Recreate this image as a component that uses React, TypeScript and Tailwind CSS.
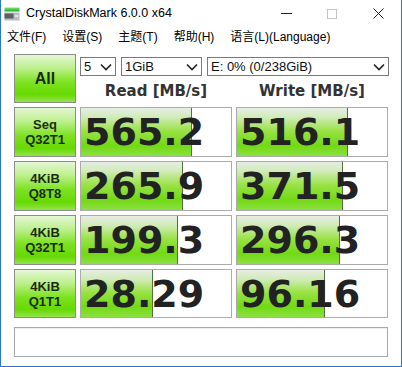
import React from 'react';

type Row = {
  top: string;
  bottom: string;
  read: string;
  write: string;
  readFill: number;
  writeFill: number;
};

const ROWS: Row[] = [
  { top: 'Seq', bottom: 'Q32T1', read: '565.2', write: '516.1', readFill: 111, writeFill: 111 },
  { top: '4KiB', bottom: 'Q8T8', read: '265.9', write: '371.5', readFill: 102, writeFill: 106 },
  { top: '4KiB', bottom: 'Q32T1', read: '199.3', write: '296.3', readFill: 97, writeFill: 103 },
  { top: '4KiB', bottom: 'Q1T1', read: '28.29', write: '96.16', readFill: 72, writeFill: 88 },
];

const uiFont = "font-['Liberation_Sans','Noto_Sans_CJK_SC',sans-serif]";
const numFont = "font-['DejaVu_Sans',sans-serif]";

// green gradient used by the test buttons
const btnBg =
  'bg-[linear-gradient(to_bottom,#e4f7d4_0%,#bdf08c_28%,#7de220_58%,#66d902_84%,#94e34c_100%)]';
// green gradient used by the result bars
const barBg =
  'bg-[linear-gradient(to_bottom,#e8ede4_0%,#d0ebb6_20%,#98e244_48%,#72da12_78%,#8ce042_100%)]';

const Chevron = () => (
  <svg width="12" height="8" viewBox="0 0 12 8" className="shrink-0">
    <path d="M1 1.5 L6 6.5 L11 1.5" fill="none" stroke="#222" strokeWidth="1.6" />
  </svg>
);

const Combo: React.FC<{ label: string; className: string }> = ({ label, className }) => (
  <div
    className={`h-[19px] border border-[#7a7a7a] bg-white flex items-center justify-between pl-[3px] pr-[3px] text-[13px] text-[#111] ${className}`}
  >
    <span className="leading-none">{label}</span>
    <Chevron />
  </div>
);

const TestButton: React.FC<{ children: React.ReactNode; className?: string }> = ({ children, className }) => (
  <div
    className={`w-[62px] border border-[#8d8d8d] ${btnBg} flex flex-col items-center justify-center font-bold text-[#1d2a12] ${className ?? ''}`}
  >
    {children}
  </div>
);

const Cell: React.FC<{ value: string; fill: number }> = ({ value, fill }) => (
  <div className="relative w-[152px] h-full border border-[#ababab] bg-white overflow-hidden">
    <div
      className={`absolute left-0 top-0 bottom-0 ${barBg} border-r border-[#56703f]`}
      style={{ width: fill }}
    />
    <div
      className={`relative h-full flex items-center pl-[3px] ${numFont} text-[38px] font-bold leading-none text-[#222]`}
    >
      {value}
    </div>
  </div>
);

const AppIcon = () => (
  <svg width="16" height="14" viewBox="0 0 16 14">
    <defs>
      <linearGradient id="g" x1="0" y1="0" x2="0" y2="1">
        <stop offset="0" stopColor="#7de86a" />
        <stop offset="1" stopColor="#1fa52b" />
      </linearGradient>
    </defs>
    <rect x="0.5" y="0.5" width="15" height="4" fill="url(#g)" />
    <rect x="0.5" y="5.5" width="15" height="8" fill="#b9bdbf" />
    <rect x="0.5" y="6.5" width="9" height="5" fill="#5c6165" />
    <rect x="11" y="8" width="3" height="2" fill="#e8e8e8" />
  </svg>
);

const App: React.FC = () => {
  return (
    <div
      className={`w-[402px] h-[367px] bg-white border-x border-b border-[#2b79c6] flex flex-col ${uiFont} text-black overflow-hidden`}
    >
      {/* title bar */}
      <div className="h-[27px] flex items-center shrink-0">
        <div className="pl-[3px] pr-[6px] flex items-center">
          <AppIcon />
        </div>
        <span className="text-[12.5px] leading-none">CrystalDiskMark 6.0.0 x64</span>
        <div className="ml-auto flex items-center h-full">
          <div className="w-[46px] h-full flex items-center justify-center">
            <div className="w-[11px] h-[1px] bg-[#222]" />
          </div>
          <div className="w-[46px] h-full flex items-center justify-center">
            <div className="w-[10px] h-[10px] border border-[#c4c4c4]" />
          </div>
          <div className="w-[46px] h-full flex items-center justify-center">
            <svg width="11" height="11" viewBox="0 0 11 11">
              <path d="M0.5 0.5 L10.5 10.5 M10.5 0.5 L0.5 10.5" stroke="#222" strokeWidth="1" />
            </svg>
          </div>
        </div>
      </div>

      {/* menu bar */}
      <div className="h-[19px] flex items-center text-[12px] leading-none shrink-0 pl-[6px] gap-[16px]">
        <span>文件(F)</span>
        <span>设置(S)</span>
        <span>主题(T)</span>
        <span>帮助(H)</span>
        <span>语言(L)(Language)</span>
      </div>

      {/* main area */}
      <div className="flex flex-col pl-[13px] pt-[8px]">
        <div className="flex gap-[4px] h-[49px]">
          <TestButton className="text-[16px]">All</TestButton>
          <div className="flex flex-col">
            <div className="flex gap-[5px] mt-[3px]">
              <Combo label="5" className="w-[36px]" />
              <Combo label="1GiB" className="w-[81px]" />
              <Combo label="E: 0% (0/238GiB)" className="w-[182px]" />
            </div>
            <div
              className={`flex mt-[8px] ${numFont} text-[15px] font-bold text-[#333] leading-none`}
            >
              <div className="w-[152px] text-center">Read [MB/s]</div>
              <div className="w-[4px]" />
              <div className="w-[152px] text-center">Write [MB/s]</div>
            </div>
          </div>
        </div>

        <div className="flex flex-col gap-[4px] mt-[4px]">
          {ROWS.map((r, i) => (
            <div key={i} className={`flex gap-[4px] ${i === 3 ? 'h-[49px]' : 'h-[50px]'}`}>
              <TestButton className="text-[13px] leading-[15px]">
                <span>{r.top}</span>
                <span>{r.bottom}</span>
              </TestButton>
              <Cell value={r.read} fill={r.readFill} />
              <Cell value={r.write} fill={r.writeFill} />
            </div>
          ))}
        </div>

        <div className="mt-[9px] w-[374px] h-[30px] border border-[#a8a8a8] bg-white shadow-[inset_0_1px_1px_rgba(0,0,0,0.06)]" />
      </div>
    </div>
  );
};

export default App;
